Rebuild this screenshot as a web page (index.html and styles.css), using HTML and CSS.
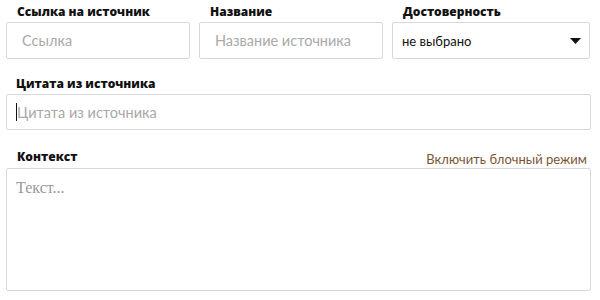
FILE: index.html
```html
<!DOCTYPE html>
<html lang="ru">
<head>
    <meta charset="UTF-8">
    <title>Источник</title>
    <link rel="stylesheet" href="styles.css">
</head>
<body>

<form class="source-form">

    <div class="row row-top">
        <div class="field">
            <label class="label">Ссылка на источник</label>
            <input class="input" type="text" placeholder="Ссылка">
        </div>
        <div class="field">
            <label class="label">Название</label>
            <input class="input" type="text" placeholder="Название источника">
        </div>
        <div class="field">
            <label class="label">Достоверность</label>
            <div class="select">
                <span>не выбрано</span>
                <svg class="arrow" width="11" height="6" viewBox="0 0 11 6"><path d="M0 0 L11 0 L5.5 6 Z" fill="#111"/></svg>
            </div>
        </div>
    </div>

    <div class="field field-quote">
        <label class="label">Цитата из источника</label>
        <div class="input-wrap">
            <input class="input" type="text" placeholder="Цитата из источника">
            <span class="caret"></span>
        </div>
    </div>

    <div class="field field-context">
        <div class="label-line">
            <label class="label">Контекст</label>
            <a class="mode-link" href="#">Включить блочный режим</a>
        </div>
        <textarea class="textarea" placeholder="Текст..."></textarea>
    </div>

</form>

</body>
</html>
```

FILE: styles.css
```css
* {
    box-sizing: border-box;
    margin: 0;
    padding: 0;
}

body {
    background: #fff;
    font-family: Lato, "Open Sans", sans-serif;
    color: #111;
}

.source-form {
    width: 591px;
    padding: 4px 0 0 6px;
}

.row-top {
    display: grid;
    grid-template-columns: 184px 184px 198px;
    column-gap: 9px;
}

.field {
    display: flex;
    flex-direction: column;
}

.label {
    display: block;
    font-family: "Open Sans", "Noto Sans", sans-serif;
    font-size: 12px;
    font-weight: 800;
    line-height: 16px;
    padding-left: 11px;
    margin-bottom: 2px;
}

.input {
    height: 37px;
    width: 100%;
    border: 1px solid #d8d8d8;
    border-radius: 2px;
    padding: 0 15px;
    font-family: Lato, "Open Sans", sans-serif;
    font-size: 14.5px;
    color: #111;
    outline: none;
}

.input::placeholder {
    color: #a9a9a9;
}

.select {
    height: 37px;
    border: 1px solid #d8d8d8;
    border-radius: 2px;
    padding: 0 8px 0 9px;
    display: flex;
    align-items: center;
    justify-content: space-between;
    font-size: 13px;
}

.field-quote {
    margin-top: 17px;
}

.field-quote .label {
    padding-left: 10px;
}

.input-wrap {
    position: relative;
}

.field-quote .input {
    height: 36px;
    padding-left: 10px;
}

.caret {
    position: absolute;
    left: 10px;
    top: 9px;
    width: 1px;
    height: 18px;
    background: #111;
}

.field-context {
    margin-top: 19px;
}

.label-line {
    display: flex;
    justify-content: space-between;
    align-items: flex-end;
    padding-right: 4px;
    margin-bottom: 1px;
}

.mode-link {
    font-size: 13px;
    color: #7a5532;
    text-decoration: none;
    line-height: 16px;
}

.textarea {
    width: 100%;
    height: 123px;
    border: 1px solid #d8d8d8;
    border-radius: 2px;
    padding: 10px 9px;
    font-family: "Liberation Serif", "DejaVu Serif", serif;
    font-size: 16px;
    resize: none;
    outline: none;
}

.textarea::placeholder {
    color: #999;
}
```
